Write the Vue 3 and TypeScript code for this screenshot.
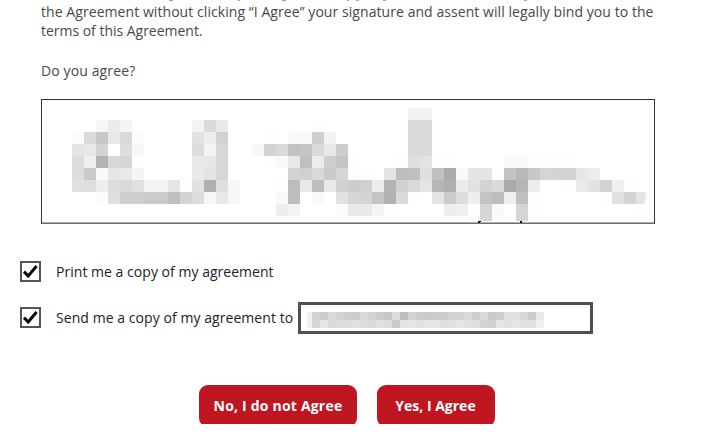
<script setup lang="ts">
import { ref } from 'vue'

interface Cell { x: number; y: number; w: number; h: number; fill: string }

// Each run starts at a column and lists one grey byte per cell.
type Run = [number, string]

const signatureRows: Run[][] = [
  [[28, 'f1f1']],
  [[2, 'f7ebf4'], [10, 'f3dae8'], [20, 'fd'], [28, 'dbdb']],
  [[0, 'fcdbc7e8dafc'], [10, 'e2eed2'], [16, 'fd'], [18, 'f9f8cff2'], [28, 'dbdb']],
  [[0, 'e4e8d4ffddf7'], [10, 'ddf4d7'], [15, 'f7d4dac2c5dae8cd'], [28, 'dada']],
  [[0, 'ddf0b3d8d5fe'], [10, 'e8e7d7'], [16, 'fdf9e8bfeccec4fd'], [27, 'fddfe3fdfd'], [36, 'fafafdfdfdfd']],
  [[0, 'ddcafae6e8f5'], [10, 'e9e4d7'], [18, 'd3d0d9cad6fdfd'], [26, 'e3bdc0dfc0abf9e3e4fdc2b9c8d5d4d4e7ec']],
  [[0, 'e0deeddddae0f3f3e6fde2b0dff7'], [17, 'fdbde8bde8d1cdd0ecb3d0dae5b6b0ebe2d3daaab6ed'], [41, 'fdeae2d3f0fd']],
  [[2, 'fcdfcfcfcbcbbfd4dcf6e9f7'], [17, 'fabdfff9ffe2d5d4c4b2dafeffe4cbddeec4bdefc0fd'], [44, 'fde1d4e4']],
  [[17, 'edf4'], [22, 'fbe9e9f3fe'], [31, 'edeffed6fa'], [37, 'd5fd'], [47, 'fd']],
  [[33, 'fad6'], [37, 'd5']]
]

const emailRows: Run[][] = [
  [[0, 'd3cbdad2cfcddad2cdc6ddbdd2cdc9cccbd4d4dacfd9c9cfe0e0d7cbe9']],
  [[0, 'd6e6dbdddde2ddd9e0ddcae4e7e1e7e7dee2e6e2dfd2d0e5e2e6e0e1f0']]
]

function toCells(rows: Run[][], size: number, left: number, top: number, right: number, bottom: number): Cell[] {
  return rows.flatMap((runs, r) => runs.flatMap(([start, tones]) =>
    (tones.match(/../g) ?? []).map((tone, i) => {
      const x = left + (start + i) * size
      const y = top + r * size
      return { x, y, w: Math.min(size, right - x), h: Math.min(size, bottom - y), fill: `#${tone}${tone}${tone}` }
    })
  ))
}

const signature = toCells(signatureRows, 12, 30, 8, 603, 121)
const email = toCells(emailRows, 8, 5, 0, 237, 16)
const printCopy = ref(true)
const sendCopy = ref(true)
</script>

<template>
  <main class="page">
    <svg class="cut" width="714" height="2" viewBox="0 0 714 2" aria-hidden="true">
      <path d="M169 .4h4M238 .4h2M282 .4h4M347 .4h2M356 .4h3M383 .4h3M524 .4h3" />
    </svg>
    <section class="terms">
      <p class="l1">the Agreement without clicking “I Agree” your signature and assent will legally bind you to the</p>
      <p class="l2">terms of this Agreement.</p>
      <p class="question">Do you agree?</p>
    </section>

    <div class="signature">
      <svg width="612" height="123" viewBox="0 0 612 123" shape-rendering="crispEdges">
        <rect v-for="(c, i) in signature" :key="i" :x="c.x" :y="c.y" :width="c.w" :height="c.h" :fill="c.fill" />
        <rect x="603" y="92" width="2" height="8" fill="#f4f4f4" />
        <path d="M436 121h3v1h-1v1h-2zM478 121h2v2h-2z" fill="#111" />
      </svg>
    </div>

    <section class="options">
      <label class="option">
        <button class="check" type="button" role="checkbox" :aria-checked="printCopy" @click="printCopy = !printCopy">
          <svg v-if="printCopy" width="21" height="21" viewBox="0 0 21 21"><path d="M4 10.6 8.2 15 16.6 5" /></svg>
        </button>
        <span class="print">Print me a copy of my agreement</span>
      </label>
      <div class="option send-row">
        <button class="check" type="button" role="checkbox" :aria-checked="sendCopy" @click="sendCopy = !sendCopy">
          <svg v-if="sendCopy" width="21" height="21" viewBox="0 0 21 21"><path d="M4 10.6 8.2 15 16.6 5" /></svg>
        </button>
        <span class="send">Send me a copy of my agreement to</span>
        <div class="email">
          <svg width="237" height="16" viewBox="0 0 237 16" shape-rendering="crispEdges">
            <rect width="5" height="16" fill="#f1f1f1" />
            <rect v-for="(c, i) in email" :key="i" :x="c.x" :y="c.y" :width="c.w" :height="c.h" :fill="c.fill" />
          </svg>
        </div>
      </div>
    </section>

    <footer class="actions">
      <button class="action no" type="button"><span>No, I do not Agree</span></button>
      <button class="action yes" type="button"><span>Yes, I Agree</span></button>
    </footer>
  </main>
</template>

<style>
body { margin: 0; background: #fff; }
</style>

<style scoped>
* { box-sizing: border-box; }
.page {
  width: 714px;
  height: 441px;
  overflow: hidden;
  background: #fff;
  font-family: "Open Sans", "Noto Sans", sans-serif;
  font-size: 14px;
  color: #484848;
}
.cut { display: block; }
.cut path { stroke: #999; stroke-width: 1; }
.terms { height: 97px; padding-left: 41px; white-space: nowrap; }
p { margin: 0; height: 19.5px; line-height: 20px; }
.l1 { letter-spacing: .065px; }
.l2 { line-height: 18px; letter-spacing: -.02px; }
.question { margin-top: 19.5px; letter-spacing: .12px; }
.signature {
  width: 614px;
  height: 125px;
  margin-left: 41px;
  border: 1px solid #333;
  border-bottom-color: #707070;
  box-shadow: inset 0 -1px #aaa;
}
.signature svg { display: block; }
.options { padding: 37px 0 0 20px; color: #222; }
.option { display: flex; align-items: center; height: 21px; white-space: nowrap; }
.print { letter-spacing: .03px; }
.send-row { height: 32px; margin-top: 20px; }
.check { flex: none; width: 21px; height: 21px; padding: 0; border: 2px solid #555; background: #fff; margin-right: 15px; }
.send-row .check { margin-bottom: 2px; }
.check svg { display: block; margin: -2px; }
.check path { fill: none; stroke: #080808; stroke-width: 3; }
.send { width: 242px; padding-bottom: 2px; letter-spacing: .06px; }
.email { width: 295px; height: 32px; border: 3px solid #505050; padding: 7px 6px; }
.email svg { display: block; }
.actions { display: flex; gap: 19.5px; height: 39px; margin: 51px 0 0 199px; overflow: hidden; }
.action {
  height: 42px;
  padding: 0 0 1px;
  border: 0;
  border-radius: 9px;
  background: #bf1622;
  color: #fff;
  font: 700 14px/40px "Open Sans", "Noto Sans", sans-serif;
  white-space: nowrap;
}
.no { width: 158px; letter-spacing: .2px; }
.yes { width: 118px; }
</style>
